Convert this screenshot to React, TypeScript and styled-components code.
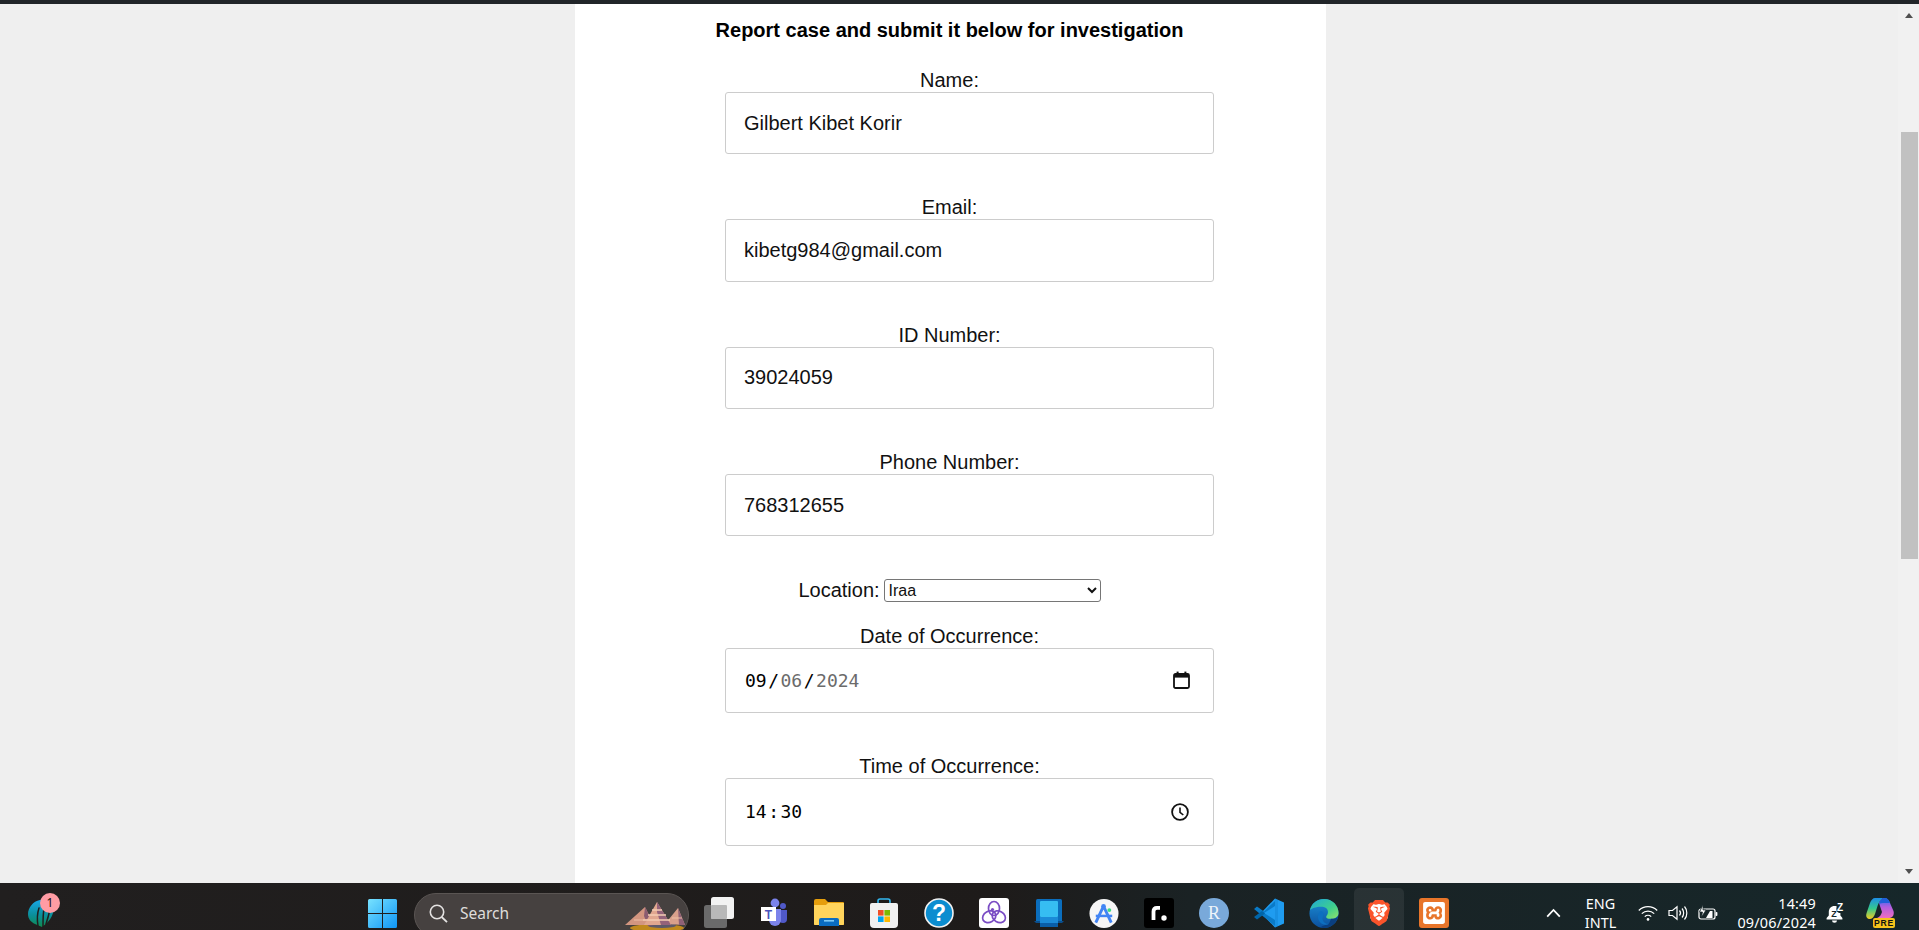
import React from "react";
import styled, { createGlobalStyle } from "styled-components";
import { SiBrave, SiXampp } from "react-icons/si";

const Global = createGlobalStyle`
  html, body { margin: 0; height: 100%; overflow: hidden; }
  body { font-family: "Liberation Sans", Arial, sans-serif; color: #111; }
  #root { height: 100%; }
  * { box-sizing: border-box; }
`;

const Screen = styled.div`
  height: 100vh;
  display: flex;
  flex-direction: column;
  overflow: hidden;
`;
const TopBar = styled.div`
  height: 4px;
  flex: none;
  background: #212529;
`;
const Viewport = styled.div`
  flex: 1;
  min-height: 0;
  display: flex;
  background: #efefef;
  overflow: hidden;
`;
const Page = styled.main`
  flex: 1;
  padding-left: 3px;
  display: flex;
  justify-content: center;
`;
const Panel = styled.section`
  width: 751px;
  background: #fff;
  padding: 15px 2px 0 0;
`;
const Heading = styled.h2`
  margin: 0 0 27px;
  font-size: 20px;
  line-height: 23px;
  font-weight: 700;
  text-align: center;
  color: #000;
`;
const Field = styled.div<{ $gap?: number }>`
  margin-bottom: ${(p) => p.$gap ?? 41.93}px;
`;
const Label = styled.label`
  display: block;
  height: 23px;
  font-size: 20px;
  line-height: 23px;
  text-align: center;
`;
const TextInput = styled.input`
  display: block;
  width: 489px;
  height: 62.4px;
  margin-left: 150px;
  padding: 0 18px;
  border: 1px solid #ccc;
  border-radius: 3px;
  background: #fff;
  font: 20px "Liberation Sans", Arial, sans-serif;
  color: #111;
  outline: none;
`;
const LocationRow = styled.div`
  display: flex;
  justify-content: center;
  align-items: center;
  gap: 4px;
  height: 23px;
  margin: 42.67px 0 23px;
  font-size: 20px;
`;
const LocationSelect = styled.select`
  width: 217px;
  height: 23px;
  font: 16px "Liberation Sans", Arial, sans-serif;
  color: #111;
  background: #fff;
  border: 1px solid #767676;
  border-radius: 3px;
`;
const PickerBox = styled.div<{ $h: number }>`
  width: 489px;
  height: ${(p) => p.$h}px;
  margin-left: 150px;
  padding: 0 23px 0 19px;
  display: flex;
  align-items: center;
  justify-content: space-between;
  border: 1px solid #ccc;
  border-radius: 3px;
  font: 18px "DejaVu Sans Mono", monospace;
  color: #000;
`;
const Seg = styled.span<{ $dim?: boolean }>`
  color: ${(p) => (p.$dim ? "#6b6b6b" : "#000")};
`;
const Sep = styled.span`
  margin: 0 1.5px;
`;

const ScrollTrack = styled.aside`
  width: 21px;
  flex: none;
  background: #f1f1f1;
  position: relative;
`;
const Thumb = styled.div`
  width: 17px;
  height: 427px;
  margin: 128px 0 0 3px;
  background: #c1c1c1;
`;
const Arrow = styled.div<{ $down?: boolean }>`
  position: absolute;
  left: 7px;
  ${(p) => (p.$down ? "bottom: 9px;" : "top: 9px;")}
  width: 0;
  height: 0;
  border-left: 4.5px solid transparent;
  border-right: 4.5px solid transparent;
  ${(p) =>
    p.$down ? "border-top: 5px solid #505050;" : "border-bottom: 5px solid #505050;"}
`;

const Taskbar = styled.footer`
  height: 47px;
  flex: none;
  display: flex;
  align-items: flex-start;
  overflow: hidden;
  background: linear-gradient(90deg, #211f1f 0%, #1e1b1a 52%, #1a2224 62%, #16272a 100%);
  color: #fff;
  font-family: "Noto Sans", sans-serif;
`;
const Widget = styled.div`
  position: relative;
  width: 28px;
  height: 30px;
  margin: 16px 0 0 27px;
`;
const Badge = styled.span`
  position: absolute;
  left: 13px;
  top: -6px;
  width: 20px;
  height: 20px;
  border-radius: 50%;
  background: #ff9ca4;
  color: #111;
  font-size: 12px;
  line-height: 20px;
  text-align: center;
`;
const StartButton = styled.div`
  width: 29px;
  height: 29px;
  margin: 16px 0 0 313px;
`;
const SearchPill = styled.div`
  position: relative;
  width: 275px;
  height: 44px;
  margin: 10px 0 0 17px;
  padding: 0 0 4px 14px;
  display: flex;
  align-items: center;
  gap: 12px;
  border: 1px solid #5a5553;
  border-radius: 22px;
  background: #464140;
  color: #dedcdb;
  font-size: 15.5px;
`;
const Scenery = styled.div`
  position: absolute;
  left: 209px;
  top: 8px;
  width: 61px;
  height: 30px;
`;
const TaskList = styled.div`
  display: flex;
  margin-left: 2.5px;
`;
const TaskSlot = styled.div`
  width: 55px;
  height: 47px;
  display: flex;
  justify-content: center;
`;
const TaskTile = styled.div<{ $active?: boolean }>`
  width: 50px;
  height: 47px;
  margin-top: 5px;
  padding-top: 10px;
  display: flex;
  justify-content: center;
  border-radius: 5px 5px 0 0;
  background: ${(p) => (p.$active ? "rgba(255,255,255,.07)" : "transparent")};
`;
const IconFrame = styled.div`
  width: 30px;
  height: 30px;
  display: flex;
  align-items: center;
  justify-content: center;
`;
const Tray = styled.div`
  margin-left: auto;
  margin-right: 24px;
  height: 47px;
  padding-top: 13px;
  display: flex;
  align-items: center;
`;
const TrayLines = styled.div<{ $w: number; $align: string }>`
  width: ${(p) => p.$w}px;
  display: flex;
  flex-direction: column;
  align-items: ${(p) => p.$align};
  gap: 5px;
  font-size: 14.4px;
  line-height: 14px;
  white-space: nowrap;
`;
const LangBlock = styled(TrayLines)`
  margin: 0 23px 0 25px;
`;
const ClockBlock = styled(TrayLines)`
  margin-left: 10px;
  letter-spacing: 0.2px;
`;
const TrayIcon = styled.div<{ $w?: number; $ml?: number }>`
  width: ${(p) => p.$w ?? 20}px;
  margin-left: ${(p) => p.$ml ?? 0}px;
  display: flex;
`;

const TextField = ({ label, value }: { label: string; value: string }) => (
  <Field>
    <Label>{label}</Label>
    <TextInput readOnly value={value} />
  </Field>
);

const Calendar = () => (
  <svg width="17" height="18" viewBox="0 0 17 18" fill="none">
    <rect x="1" y="3" width="15" height="14" rx="1.5" stroke="#111" strokeWidth="1.8" />
    <rect x="1" y="3" width="15" height="3.6" fill="#111" />
    <rect x="3.6" y="0.6" width="2" height="3" fill="#111" />
    <rect x="11.4" y="0.6" width="2" height="3" fill="#111" />
  </svg>
);
const Clock = () => (
  <svg width="18" height="18" viewBox="0 0 18 18" fill="none" style={{ marginRight: 1 }}>
    <circle cx="9" cy="9" r="7.9" stroke="#111" strokeWidth="1.8" />
    <path d="M9 4.4V9.3L12.3 12" stroke="#111" strokeWidth="1.6" />
  </svg>
);

const WindowsLogo = () => (
  <svg width="29" height="29" viewBox="0 0 29 29">
    <defs>
      <linearGradient id="wg" x1="0" y1="0" x2="1" y2="1">
        <stop offset="0" stopColor="#78e2ff" />
        <stop offset="1" stopColor="#0f95f5" />
      </linearGradient>
    </defs>
    <path d="M0 1.5A1.5 1.5 0 0 1 1.5 0H14V14H0ZM15 0H27.5A1.5 1.5 0 0 1 29 1.5V14H15ZM0 15H14V29H1.5A1.5 1.5 0 0 1 0 27.5ZM15 15H29V27.5A1.5 1.5 0 0 1 27.5 29H15Z" fill="url(#wg)" />
  </svg>
);

const WidgetBlob = () => (
  <svg width="28" height="30" viewBox="0 0 28 30" fill="none">
    <defs>
      <linearGradient id="bl" x1="0" y1="0" x2="0" y2="1">
        <stop offset="0" stopColor="#19a8e8" />
        <stop offset=".55" stopColor="#0b8f9c" />
        <stop offset="1" stopColor="#0f8a50" />
      </linearGradient>
    </defs>
    <path d="M13 1C6 2 1 9 1 15C1 20 4 23 8 25L15 28C21 24 27 17 27 8C24 2 18 0 13 1Z" fill="url(#bl)" />
    <path d="M12 9C10 15 10 21 11 27M17 9C16 15 16 21 16 28M23 10C22 15 21 19 19 25" stroke="#201e1e" strokeWidth="1.5" strokeLinecap="round" />
  </svg>
);

const Mountains = () => (
  <svg width="61" height="30" viewBox="0 0 61 30">
    <ellipse cx="33" cy="26" rx="27" ry="4" fill="#c08a1e" />
    <ellipse cx="38" cy="23.5" rx="14" ry="2.6" fill="#5d5a6a" />
    <polygon points="1,23 21,5 30,23" fill="#d39680" />
    <polygon points="21,5 30,23 24,24 20,14" fill="#8b5c70" />
    <polygon points="41,22 54,6 61,23" fill="#d9a08b" />
    <polygon points="54,6 61,23 55,23" fill="#8f6177" />
    <polygon points="20,23 33,0 47,23" fill="#e0a78f" />
    <polygon points="33,0 47,23 37,23 33,10" fill="#94627a" />
    <path d="M28 8H38M24 13H42M19 18H46" stroke="#f4cdb4" strokeWidth="1.3" />
    <path d="M10 18H25M48 16H58" stroke="#f0bfa5" strokeWidth="1.2" />
  </svg>
);

const Search = () => (
  <svg width="19" height="19" viewBox="0 0 19 19" fill="none">
    <circle cx="8" cy="8" r="6.7" stroke="#e4e2e1" strokeWidth="1.6" />
    <path d="M12.7 13L18 18.2" stroke="#e4e2e1" strokeWidth="1.8" />
  </svg>
);

const TaskView = () => (
  <svg width="30" height="32" viewBox="0 0 30 32">
    <rect x="0" y="8" width="23" height="23" rx="2.5" fill="#6a6a6a" />
    <rect x="7" y="0" width="23" height="22" rx="2.5" fill="#f2f2f2" />
    <rect x="7" y="8" width="16" height="14" rx="1" fill="#b8b8b8" />
  </svg>
);

const Teams = () => (
  <svg width="30" height="30" viewBox="0 0 30 30">
    <circle cx="16" cy="5" r="4.4" fill="#7b83eb" />
    <circle cx="24" cy="8" r="3" fill="#5059c9" />
    <path d="M20 12H28V21A4 4 0 0 1 20 21Z" fill="#5059c9" />
    <path d="M10 11H22V22A6 6 0 0 1 10 22Z" fill="#7b83eb" />
    <rect x="2" y="9" width="15" height="14" fill="#fff" />
    <text x="9.5" y="20.5" fontFamily="Liberation Sans" fontSize="12" fontWeight="700" fill="#4b53bc" textAnchor="middle">T</text>
  </svg>
);

const Folder = () => (
  <svg width="30" height="30" viewBox="0 0 30 30">
    <path d="M0 3A2 2 0 0 1 2 1H11L14 4H29A1 1 0 0 1 30 5V26A1 1 0 0 1 29 27H1A1 1 0 0 1 0 26Z" fill="#e59e0c" />
    <path d="M0 7H12L14 5H30V26A1 1 0 0 1 29 27H1A1 1 0 0 1 0 26Z" fill="#ffd45c" />
    <path d="M5 28V22A2 2 0 0 1 7 20H23A2 2 0 0 1 25 22V28Z" fill="#0a6cc0" />
    <rect x="10" y="22" width="10" height="1.6" fill="#7cc8f5" />
  </svg>
);

const Store = () => (
  <svg width="30" height="30" viewBox="0 0 30 30">
    <path d="M9 6V3A2 2 0 0 1 11 1H19A2 2 0 0 1 21 3V6" fill="none" stroke="#33b8f0" strokeWidth="1.6" />
    <path d="M1 7A2 2 0 0 1 3 5H27A2 2 0 0 1 29 7V26A4 4 0 0 1 25 30H5A4 4 0 0 1 1 26Z" fill="#f1f1f1" />
    <rect x="9" y="12" width="5.6" height="5.6" fill="#ef4f27" />
    <rect x="15.4" y="12" width="5.6" height="5.6" fill="#7db900" />
    <rect x="9" y="18.4" width="5.6" height="5.6" fill="#00a3ee" />
    <rect x="15.4" y="18.4" width="5.6" height="5.6" fill="#fdb800" />
  </svg>
);

const Help = () => (
  <svg width="30" height="30" viewBox="0 0 30 30">
    <circle cx="15" cy="15" r="14" fill="#0b8dd0" stroke="#f1f1f1" strokeWidth="1.6" />
    <text x="15" y="23" fontFamily="Liberation Sans" fontSize="23" fontWeight="700" fill="#fff" textAnchor="middle">?</text>
  </svg>
);

const Relay = () => (
  <svg width="30" height="30" viewBox="0 0 30 30" fill="none">
    <rect width="30" height="30" rx="3" fill="#fff" />
    <g stroke="#7a4cc4" strokeWidth="1.7">
      <ellipse cx="15" cy="10.5" rx="5.5" ry="7" />
      <ellipse cx="15" cy="10.5" rx="5.5" ry="7" transform="rotate(120 15 16)" />
      <ellipse cx="15" cy="10.5" rx="5.5" ry="7" transform="rotate(240 15 16)" />
    </g>
    <circle cx="13.5" cy="11.5" r="1.6" fill="#7a4cc4" />
  </svg>
);

const Book = () => (
  <svg width="30" height="30" viewBox="0 0 30 30">
    <rect x="2" y="1" width="26" height="23" rx="1.5" fill="#0b6ebd" />
    <path d="M0 23H30L28 25H2Z" fill="#0a4f8d" />
    <rect x="6" y="3" width="18" height="16" rx="1" fill="#36bdf2" />
    <rect x="6" y="19" width="18" height="6" fill="#1b8bd8" />
    <rect x="6" y="25" width="18" height="4" fill="#0a5ea8" />
  </svg>
);

const AndroidStudio = () => (
  <svg width="31" height="31" viewBox="0 0 31 31" fill="none">
    <circle cx="15.5" cy="15.5" r="15" fill="#f6f6f6" />
    <circle cx="15" cy="8" r="2.4" fill="#4285f4" />
    <path d="M14.5 9L7 25M15.5 9L23 25" stroke="#4285f4" strokeWidth="3" />
    <path d="M7 18H24" stroke="#4285f4" strokeWidth="2.6" />
    <circle cx="21" cy="12" r="2" fill="#3ddc84" />
  </svg>
);

const RDot = () => (
  <svg width="30" height="30" viewBox="0 0 30 30" fill="none">
    <rect width="30" height="30" rx="3" fill="#000" />
    <path d="M9.5 22V13.5C9.5 11 11 9.8 13 9.8H16" stroke="#fff" strokeWidth="3.8" />
    <circle cx="20" cy="20" r="2.7" fill="#fff" />
  </svg>
);

const RLang = () => (
  <svg width="30" height="30" viewBox="0 0 30 30">
    <circle cx="15" cy="15" r="15" fill="#79a9da" />
    <text x="15" y="21" fontFamily="Liberation Serif" fontSize="18" fill="#eef4fb" textAnchor="middle">R</text>
  </svg>
);

const VSCode = () => (
  <svg width="30" height="30" viewBox="0 0 30 30">
    <path d="M21 0.5L30 4.5V25.5L21 29.5L7 15Z" fill="#1f9cf0" />
    <path d="M21 0.5V29.5L24 28V2Z" fill="#0f7fcc" opacity=".35" />
    <path d="M21 8L10 15L21 22V28L0 11L3 8.5L10 13.5L21 3Z" fill="#0a7ac7" />
    <path d="M0 19L3 21.5L11 15.5L8 13Z" fill="#0065a9" />
  </svg>
);

const Edge = () => (
  <svg width="31" height="31" viewBox="0 0 31 31">
    <defs>
      <linearGradient id="e1" x1="0" y1="0" x2="1" y2="1">
        <stop offset="0" stopColor="#1fa8d8" />
        <stop offset=".6" stopColor="#3fd08c" />
        <stop offset="1" stopColor="#93e26a" />
      </linearGradient>
      <linearGradient id="e2" x1="0" y1="0" x2="0" y2="1">
        <stop offset="0" stopColor="#1b8fd8" />
        <stop offset="1" stopColor="#0c4f9c" />
      </linearGradient>
    </defs>
    <circle cx="15.5" cy="15.5" r="15" fill="url(#e2)" />
    <path d="M1 12C3 4 9 .5 15.5 .5C24 .5 30.5 7 30.5 15C30.5 19 27 21 23 21C19 21 17 20 18 18C21 15 20 9 14 8.5C8 8 3 10 1 12Z" fill="url(#e1)" />
    <path d="M23 21C27 21 29 20 30 18C29 25 23 30.5 15 30.5C10 30.5 13 28 18 27C22 26 21 24 23 21Z" fill="#0a3f80" />
    <path d="M13 13C9 14 8 20 11 24C13 27 18 28 21 26C16 27 12 22 15 17C15 15 14 14 13 13Z" fill="#0d6fc0" />
  </svg>
);

const BraveShield = styled.div`
  position: relative;
  width: 26px;
  height: 30px;
  display: flex;
  align-items: center;
  justify-content: center;
  color: #fb542b;
  font-size: 30px;
  &::before {
    content: "";
    position: absolute;
    left: 4px;
    right: 4px;
    top: 5px;
    bottom: 6px;
    background: #fff;
    border-radius: 6px;
    z-index: 0;
  }
  & > svg { position: relative; z-index: 1; }
`;

const XamppTile = styled.div`
  width: 30px;
  height: 30px;
  border-radius: 3px;
  background: #e8752a;
  color: #fff;
  display: flex;
  align-items: center;
  justify-content: center;
  font-size: 22px;
`;

const Chevron = () => (
  <svg width="15" height="10" viewBox="0 0 15 10" fill="none">
    <path d="M1.2 8.6L7.5 2L13.8 8.6" stroke="#fff" strokeWidth="1.8" />
  </svg>
);
const Wifi = () => (
  <svg width="20" height="18" viewBox="0 0 20 18" fill="none" stroke="#fff" strokeWidth="1.3">
    <path d="M.8 6.5C5.8 1.4 14.2 1.4 19.2 6.5" />
    <path d="M3.8 9.6C7.3 6.2 12.7 6.2 16.2 9.6" />
    <path d="M6.8 12.6C8.6 10.9 11.4 10.9 13.2 12.6" />
    <circle cx="10" cy="15.4" r="1.3" fill="#fff" stroke="none" />
  </svg>
);
const Speaker = () => (
  <svg width="20" height="18" viewBox="0 0 20 18" fill="none" stroke="#fff" strokeWidth="1.2">
    <path d="M1 6.5H4.5L9 2.8V15.2L4.5 11.5H1Z" />
    <path d="M11.5 6.5C12.8 8 12.8 10 11.5 11.5" />
    <path d="M14 4.5C16.2 7 16.2 11 14 13.5" />
    <path d="M16.5 2.5C19.6 6 19.6 12 16.5 15.5" />
  </svg>
);
const Battery = () => (
  <svg width="20" height="18" viewBox="0 0 20 18" fill="none">
    <rect x="1" y="5" width="16" height="10" rx="2" stroke="#fff" strokeWidth="1.2" />
    <rect x="17.6" y="8" width="1.8" height="4" rx=".8" fill="#fff" />
    <path d="M8 14L12 7H14.5V14Z" fill="#fff" />
    <path d="M5 1L1.5 8H4.5L3.5 13L8 6H5Z" fill="#fff" stroke="#17272a" strokeWidth=".7" />
  </svg>
);
const Bell = () => (
  <svg width="18" height="20" viewBox="0 0 18 20">
    <path d="M8.5 3C5 3 2.8 5.6 2.8 9V12.5L.6 15V16.5H16.4V15L14.4 12.5V10C11 10 9.5 7 10.8 3.4C10 3.1 9.3 3 8.5 3Z" fill="#fff" />
    <path d="M6 17.5H11A2.5 2.2 0 0 1 6 17.5Z" fill="#fff" />
    <text x="8" y="13.5" fontFamily="Liberation Sans" fontSize="9" fontWeight="700" fill="#17272a" textAnchor="middle">Z</text>
    <text x="14" y="8" fontFamily="Liberation Sans" fontSize="10" fontWeight="700" fill="#fff" textAnchor="middle">Z</text>
  </svg>
);
const Copilot = () => (
  <svg width="29" height="30" viewBox="0 0 29 30">
    <defs>
      <linearGradient id="c1" x1="0" y1="0" x2="0" y2="1">
        <stop offset="0" stopColor="#1e8fe8" />
        <stop offset=".5" stopColor="#35c98e" />
        <stop offset="1" stopColor="#f2cc1f" />
      </linearGradient>
      <linearGradient id="c2" x1="0" y1="0" x2="0" y2="1">
        <stop offset="0" stopColor="#2d6ff0" />
        <stop offset=".45" stopColor="#b25ee0" />
        <stop offset="1" stopColor="#ee6ec0" />
      </linearGradient>
    </defs>
    <path d="M9 0H17C14 2 12.5 5 11.5 8L9 16C8 19 6 21 3.5 21C.5 21 -.5 18 .6 15L4 5C5 2 7 0 9 0Z" fill="url(#c1)" />
    <path d="M13 5C14 2 16 0 18.5 0C21.5 0 23 2 24 5L27.5 13C28.5 16 27 20 23.5 20H11C14 19 15 17 16 14Z" fill="url(#c2)" />
    <path d="M13 6C14 2.5 16 0 18.5 0C21.5 0 23 2 24 5L18 5C16 5 14.5 5 13 6Z" fill="#1f5fd8" />
    <rect x="7" y="20" width="22" height="10" rx="2" fill="#f7c31c" />
    <text x="18" y="28.2" fontFamily="Liberation Sans" fontSize="8.6" fontWeight="700" letterSpacing=".7" fill="#111" textAnchor="middle">PRE</text>
  </svg>
);

const taskIcons: { key: string; node: React.ReactNode; active?: boolean }[] = [
  { key: "view", node: <TaskView /> },
  { key: "teams", node: <Teams /> },
  { key: "folder", node: <Folder /> },
  { key: "store", node: <Store /> },
  { key: "help", node: <Help /> },
  { key: "relay", node: <Relay /> },
  { key: "book", node: <Book /> },
  { key: "studio", node: <AndroidStudio /> },
  { key: "rdot", node: <RDot /> },
  { key: "r", node: <RLang /> },
  { key: "vscode", node: <VSCode /> },
  { key: "edge", node: <Edge /> },
  { key: "brave", node: <BraveShield><SiBrave /></BraveShield>, active: true },
  { key: "xampp", node: <XamppTile><SiXampp /></XamppTile> },
];

export default function App() {
  return (
    <Screen>
      <Global />
      <TopBar />
      <Viewport>
        <Page>
          <Panel>
            <Heading>Report case and submit it below for investigation</Heading>
            <TextField label="Name:" value="Gilbert Kibet Korir" />
            <TextField label="Email:" value="kibetg984@gmail.com" />
            <TextField label="ID Number:" value="39024059" />
            <TextField label="Phone Number:" value="768312655" />
            <LocationRow>
              <span>Location:</span>
              <LocationSelect defaultValue="Iraa">
                <option>Iraa</option>
              </LocationSelect>
            </LocationRow>
            <Field $gap={42}>
              <Label>Date of Occurrence:</Label>
              <PickerBox $h={65}>
                <span>
                  <Seg>09</Seg>
                  <Sep>/</Sep>
                  <Seg $dim>06</Seg>
                  <Sep>/</Sep>
                  <Seg $dim>2024</Seg>
                </span>
                <Calendar />
              </PickerBox>
            </Field>
            <Field>
              <Label>Time of Occurrence:</Label>
              <PickerBox $h={68}>
                <span>
                  14
                  <Sep>:</Sep>
                  30
                </span>
                <Clock />
              </PickerBox>
            </Field>
          </Panel>
        </Page>
        <ScrollTrack>
          <Arrow />
          <Thumb />
          <Arrow $down />
        </ScrollTrack>
      </Viewport>
      <Taskbar>
        <Widget>
          <WidgetBlob />
          <Badge>1</Badge>
        </Widget>
        <StartButton>
          <WindowsLogo />
        </StartButton>
        <SearchPill>
          <Search />
          <span>Search</span>
          <Scenery>
            <Mountains />
          </Scenery>
        </SearchPill>
        <TaskList>
          {taskIcons.map((t) => (
            <TaskSlot key={t.key}>
              <TaskTile $active={t.active}>
                <IconFrame>{t.node}</IconFrame>
              </TaskTile>
            </TaskSlot>
          ))}
        </TaskList>
        <Tray>
          <TrayIcon $w={15}>
            <Chevron />
          </TrayIcon>
          <LangBlock $w={29} $align="center">
            <span>ENG</span>
            <span>INTL</span>
          </LangBlock>
          <TrayIcon>
            <Wifi />
          </TrayIcon>
          <TrayIcon $ml={10}>
            <Speaker />
          </TrayIcon>
          <TrayIcon $ml={10}>
            <Battery />
          </TrayIcon>
          <ClockBlock $w={88} $align="flex-end">
            <span>14:49</span>
            <span>09/06/2024</span>
          </ClockBlock>
          <TrayIcon $w={18} $ml={10}>
            <Bell />
          </TrayIcon>
          <TrayIcon $w={29} $ml={22}>
            <Copilot />
          </TrayIcon>
        </Tray>
      </Taskbar>
    </Screen>
  );
}
